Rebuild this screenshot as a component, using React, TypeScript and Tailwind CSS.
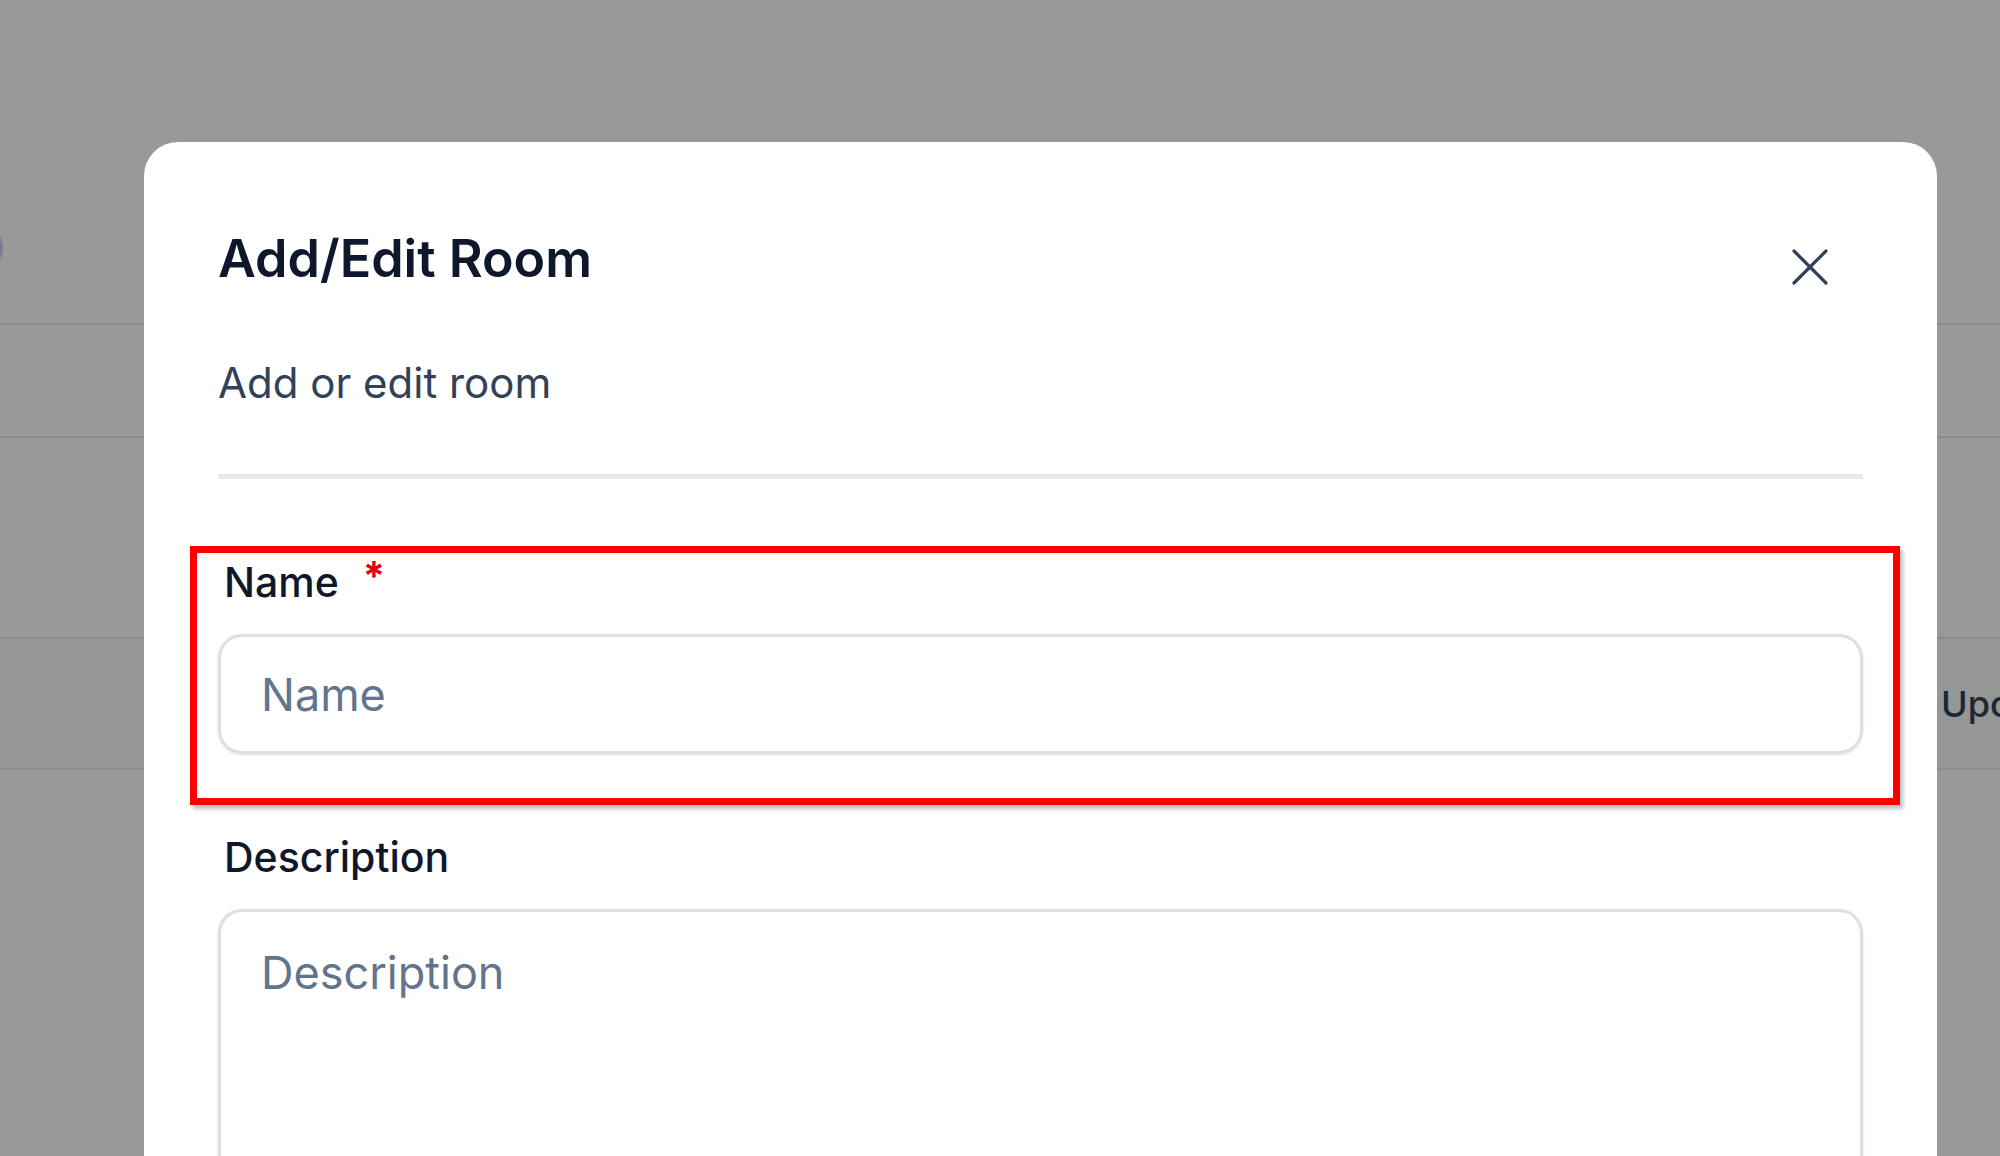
import React from 'react';

const CloseIcon = () => (
  <svg width="38" height="38" viewBox="0 0 38 38" fill="none" stroke="currentColor" strokeWidth="3.2" strokeLinecap="round">
    <path d="M3 3 L35 35" />
    <path d="M35 3 L3 35" />
  </svg>
);

export default function App() {
  return (
    <div className="relative h-[1156px] w-full overflow-hidden bg-white font-['Inter','Liberation_Sans',sans-serif]">
      {/* page under the dialog */}
      <div className="flex flex-col">
        <div className="flex h-[325px] items-start border-b-2 border-gray-200">
          <div className="-ml-[41px] mt-[226px] h-[44px] w-[44px] rounded-full bg-indigo-200" />
        </div>
        <div className="h-[113px] border-b-2 border-gray-200" />
        <div className="h-[201px] border-b-2 border-gray-200" />
        <div className="flex h-[131px] items-center justify-end border-b-2 border-gray-200 bg-gray-50">
          <span className="w-[59px] overflow-hidden whitespace-nowrap text-[36px] font-medium text-slate-700">Upcoming</span>
        </div>
      </div>

      {/* overlay + dialog */}
      <div className="absolute inset-0 bg-black/40 pl-[144px] pr-[63px] pt-[142px]">
        <div className="h-[1100px] rounded-t-[34px] bg-white px-[74px]">
          <div className="flex items-start justify-between pt-[87px]">
            <h2 className="text-[52px] font-semibold leading-[60px] text-slate-900">Add/Edit Room</h2>
            <button className="mr-[34px] mt-[19px] text-slate-700">
              <CloseIcon />
            </button>
          </div>
          <p className="mt-[69px] text-[42px] leading-[50px] text-slate-700">Add or edit room</p>
          <div className="mt-[66px] h-[5px] bg-[#e6eaf0]" />

          <div className="mt-[79px] flex flex-col">
            {/* Name */}
            <div className="relative">
              <div className="pointer-events-none absolute -bottom-[51px] -left-[28px] -right-[37px] -top-[12px] border-[7px] border-[#ff0000] shadow-[3px_4px_4px_rgba(0,0,0,0.25)]" />
              <label className="flex items-start pl-[6px] text-[41px] font-medium leading-[48px] text-slate-900">
                Name
                <span className="ml-[24px] -mt-[2px] text-[40px] font-bold leading-[40px] text-red-600">*</span>
              </label>
              <input
                placeholder="Name"
                className="mt-[28px] h-[120px] w-full rounded-[24px] border-[3px] border-[#dedee6] px-[40px] text-[45px] text-slate-900 shadow-sm outline-none placeholder:text-slate-500"
              />
            </div>

            {/* Description */}
            <div className="mt-[79px]">
              <label className="block pl-[6px] text-[41px] font-medium leading-[48px] text-slate-900">Description</label>
              <textarea
                placeholder="Description"
                className="mt-[28px] h-[300px] w-full resize-none rounded-[24px] border-[3px] border-[#dedee6] px-[40px] pt-[34px] text-[45px] leading-[54px] text-slate-900 shadow-sm outline-none placeholder:text-slate-500"
              />
            </div>
          </div>
        </div>
      </div>
    </div>
  );
}
